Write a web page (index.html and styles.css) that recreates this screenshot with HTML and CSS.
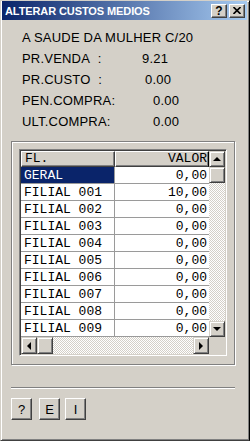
FILE: index.html
```html
<!DOCTYPE html>
<html lang="pt">
<head>
    <meta charset="UTF-8">
    <title>Alterar custos medios</title>
    <link rel="stylesheet" href="styles.css">
</head>
<body>

<div class="window">
    <div class="titlebar">
        <span class="title">ALTERAR CUSTOS MEDIOS</span>
        <div class="title-buttons">
            <span class="tbtn tbtn-help">?</span>
            <span class="tbtn">
                <svg width="8" height="7" viewBox="0 0 8 7"><path d="M0.5 0 L7.5 7 M7.5 0 L0.5 7" stroke="#000" stroke-width="1.6"/></svg>
            </span>
        </div>
    </div>

    <div class="content">
        <!-- dados do produto -->
        <div class="info">
            <div class="info-row">A SAUDE DA MULHER C/20</div>
            <div class="info-row"><span class="lbl lbl-venda">PR.VENDA&nbsp;&nbsp;:</span><span>9.21</span></div>
            <div class="info-row"><span class="lbl lbl-custo">PR.CUSTO&nbsp;&nbsp;:</span><span>0.00</span></div>
            <div class="info-row"><span class="lbl lbl-compra">PEN.COMPRA:</span><span>0.00</span></div>
            <div class="info-row"><span class="lbl lbl-compra">ULT.COMPRA:</span><span>0.00</span></div>
        </div>

        <div class="groupbox">
            <div class="grid">
                <div class="grid-body">
                    <table class="cells">
                        <thead>
                            <tr><th class="col-fl">FL.</th><th class="col-valor">VALOR</th></tr>
                        </thead>
                        <tbody>
                            <tr><td class="selected">GERAL</td><td class="num">0,00</td></tr>
                            <tr><td>FILIAL 001</td><td class="num">10,00</td></tr>
                            <tr><td>FILIAL 002</td><td class="num">0,00</td></tr>
                            <tr><td>FILIAL 003</td><td class="num">0,00</td></tr>
                            <tr><td>FILIAL 004</td><td class="num">0,00</td></tr>
                            <tr><td>FILIAL 005</td><td class="num">0,00</td></tr>
                            <tr><td>FILIAL 006</td><td class="num">0,00</td></tr>
                            <tr><td>FILIAL 007</td><td class="num">0,00</td></tr>
                            <tr><td>FILIAL 008</td><td class="num">0,00</td></tr>
                            <tr><td>FILIAL 009</td><td class="num">0,00</td></tr>
                        </tbody>
                    </table>
                    <div class="vscroll">
                        <span class="sbtn"><i class="arrow arrow-up"></i></span>
                        <span class="sbtn"></span>
                        <span class="track"></span>
                        <span class="sbtn"><i class="arrow arrow-down"></i></span>
                    </div>
                </div>
                <div class="hscroll">
                    <span class="sbtn"><i class="arrow arrow-left"></i></span>
                    <span class="sbtn"></span>
                    <span class="track"></span>
                    <span class="sbtn"><i class="arrow arrow-right"></i></span>
                    <span class="corner"></span>
                </div>
            </div>
        </div>

        <div class="separator"></div>

        <div class="buttons">
            <button type="button" class="btn">?</button>
            <button type="button" class="btn btn-e">E</button>
            <button type="button" class="btn btn-i">I</button>
        </div>
    </div>
</div>

</body>
</html>
```

FILE: styles.css
```css
body { margin: 0; background: #d4d0c8; font-family: "Liberation Sans", Arial, sans-serif; }

.window { width: 250px; height: 441px; box-sizing: border-box; background: #d4d0c8; border: 1px solid; border-color: #d4d0c8 #000 #404040 #d4d0c8; box-shadow: inset 1px 1px #fff, inset -1px -1px #808080; }

.titlebar { height: 19px; margin: 0 2px 0 1px; display: flex; align-items: center; justify-content: space-between; background: linear-gradient(to right, #0a246a, #a6caf0); }
.title { color: #fff; font-weight: bold; font-size: 11px; padding-left: 3px; letter-spacing: -0.1px; }
.title-buttons { display: flex; gap: 2px; padding-right: 2px; }
.tbtn { width: 16px; height: 14px; box-sizing: border-box; display: flex; align-items: center; justify-content: center; background: #d4d0c8; border: 1px solid; border-color: #fff #404040 #404040 #fff; box-shadow: inset -1px -1px #808080; font-size: 12px; font-weight: bold; color: #000; }

.content { padding: 0 0 0 10px; }

.info { padding: 7px 0 0 11px; font-size: 13px; color: #000; letter-spacing: 0.2px; }
.info-row { height: 21px; line-height: 21px; display: flex; }
.lbl-venda { width: 120px; }
.lbl-custo { width: 123px; }
.lbl-compra { width: 131px; }

.groupbox { margin-top: 9px; width: 224px; height: 224px; box-sizing: border-box; border: 1px solid #808080; box-shadow: inset 1px 1px #fff, 1px 1px #fff; padding: 7px 0 0 7px; }

.grid { width: 208px; height: 207px; box-sizing: border-box; border: 1px solid; border-color: #808080 #fff #fff #808080; box-shadow: inset 1px 1px #404040, inset -1px -1px #d4d0c8; padding: 1px; background: #fff; }
.grid-body { display: flex; height: 186px; }

.cells { width: 188px; border-spacing: 0; table-layout: fixed; font-family: "Liberation Mono", "Courier New", monospace; font-size: 13px; color: #000; }
.cells th { height: 16px; box-sizing: border-box; padding: 0 3px; line-height: 14px; font-weight: normal; background: #d4d0c8; border: 1px solid; border-color: #fff #404040 #404040 #fff; box-shadow: inset -1px -1px #808080; }
.cells .col-fl { width: 94px; text-align: left; }
.cells .col-valor { width: 94px; text-align: right; padding-right: 1px; border-right-color: #000; }
.cells td { height: 17px; box-sizing: border-box; padding: 2px 0 0 3px; line-height: 14px; border-bottom: 1px solid #9a9a9a; border-right: 1px solid #9a9a9a; white-space: nowrap; }
.cells td.num { text-align: right; padding-right: 2px; border-right: none; }
.cells td.selected { background: #0a246a; color: #fff; }

.vscroll { width: 16px; display: flex; flex-direction: column; }
.hscroll { display: flex; height: 17px; }
.track { flex: 1; background-color: #d4d0c8; background-image: conic-gradient(#fff 25%, #d4d0c8 0 50%, #fff 0 75%, #d4d0c8 0); background-size: 2px 2px; }
.sbtn { width: 16px; height: 16px; flex: none; box-sizing: border-box; display: flex; align-items: center; justify-content: center; background: #d4d0c8; border: 1px solid; border-color: #d4d0c8 #404040 #404040 #d4d0c8; box-shadow: inset 1px 1px #fff, inset -1px -1px #808080; }
.hscroll .sbtn { height: 17px; }
.corner { width: 16px; background: #d4d0c8; }

.arrow { width: 0; height: 0; border: 4px solid transparent; }
.arrow-up { border-bottom-color: #000; border-top-width: 0; }
.arrow-down { border-top-color: #000; border-bottom-width: 0; }
.arrow-left { border-right-color: #000; border-left-width: 0; }
.arrow-right { border-left-color: #000; border-right-width: 0; }

.separator { margin-top: 22px; width: 224px; border-top: 1px solid #808080; border-bottom: 1px solid #fff; }

.buttons { display: flex; margin-top: 9px; }
.btn { width: 21px; height: 22px; padding: 0; margin: 0; box-sizing: border-box; background: #d4d0c8; border: 1px solid; border-color: #fff #404040 #404040 #fff; box-shadow: inset -1px -1px #808080; font-family: "Liberation Sans", Arial, sans-serif; font-size: 13px; color: #000; }
.btn-e { margin-left: 7px; }
.btn-i { margin-left: 5px; }
```
